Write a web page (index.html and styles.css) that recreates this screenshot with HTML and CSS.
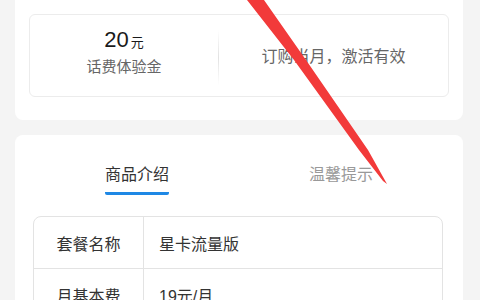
FILE: index.html
```html
<!DOCTYPE html>
<html>
<head>
  <meta charset="utf-8">
  <link rel="stylesheet" href="styles.css">
</head>
<body>
  <div class="page">
    <div class="card card-top">
      <div class="bonus-box">
        <div class="bonus-amount">
          <div class="amount"><span class="num">20</span><span class="unit">元</span></div>
          <div class="amount-label">话费体验金</div>
        </div>
        <div class="bonus-divider"></div>
        <div class="bonus-note">订购当月，激活有效</div>
      </div>
    </div>

    <div class="card card-detail">
      <div class="tabs">
        <div class="tab active"><span>商品介绍</span></div>
        <div class="tab"><span>温馨提示</span></div>
      </div>

      <div class="info-table">
        <div class="info-row">
          <div class="info-key">套餐名称</div>
          <div class="info-val">星卡流量版</div>
        </div>
        <div class="info-row">
          <div class="info-key">月基本费</div>
          <div class="info-val">19元/月</div>
        </div>
      </div>
    </div>
  </div>

  <!-- annotation stroke drawn over the screenshot -->
  <svg class="mark" width="480" height="300" viewBox="0 0 480 300">
    <polygon points="247,0 264,0 306,60 368,150 387,184 383,181 359,150 294,60" fill="#f23a3a"/>
  </svg>
</body>
</html>
```

FILE: styles.css
```css
body {
  margin: 0;
  padding: 0;
  background: #f4f4f4;
  font-family: "Liberation Sans", "Noto Sans CJK SC", sans-serif;
  color: #333;
  overflow: hidden;
}

.page {
  padding: 0 17px 0 15px;
}

.card {
  background: #fff;
  border-radius: 8px;
}

.card-top {
  border-radius: 0 0 8px 8px;
  padding: 14px 14px 23px 14px;
}

.bonus-box {
  display: flex;
  height: 81px;
  border: 1px solid #ececec;
  border-radius: 6px;
}

.bonus-amount {
  flex: 0 0 188px;
  display: flex;
  flex-direction: column;
  align-items: center;
  padding-top: 13px;
  box-sizing: border-box;
}

.amount {
  line-height: 24px;
  color: #1a1a1a;
}

.amount .num {
  font-size: 22px;
}

.amount .unit {
  font-size: 13px;
  margin-left: 2px;
}

.amount-label {
  margin-top: 2px;
  font-size: 15px;
  line-height: 20px;
  color: #666;
}

.bonus-divider {
  width: 1px;
  margin: 15px 0 11px 0;
  background: linear-gradient(to bottom, rgba(225, 225, 225, 0), #e2e2e2, rgba(225, 225, 225, 0));
}

.bonus-note {
  flex: 1;
  display: flex;
  align-items: center;
  justify-content: center;
  font-size: 16px;
  color: #666;
  padding-bottom: 1px;
}

.card-detail {
  margin-top: 15px;
  padding: 29px 20px 0 18px;
}

.tabs {
  display: flex;
  padding: 0 0 0 2px;
}

.tab {
  flex: 1;
  text-align: center;
  font-size: 16px;
  line-height: 22px;
  color: #999;
}

.tab span {
  display: inline-block;
  padding-bottom: 6px;
  border-bottom: 3px solid transparent;
}

.tab.active {
  color: #333;
}

.tab.active span {
  border-bottom-color: #1e88e5;
  border-radius: 0 0 2px 2px;
}

.info-table {
  margin-top: 21px;
  border: 1px solid #e3e3e3;
  border-radius: 8px;
}

.info-row {
  display: flex;
  height: 51px;
  border-top: 1px solid #e3e3e3;
}

.info-row:first-child {
  border-top: none;
}

.info-key {
  flex: 0 0 109px;
  display: flex;
  align-items: center;
  justify-content: center;
  border-right: 1px solid #e3e3e3;
  font-size: 16px;
  color: #333;
}

.info-val {
  flex: 1;
  display: flex;
  align-items: center;
  padding-left: 15px;
  font-size: 16px;
  color: #333;
}

.mark {
  position: fixed;
  top: 0;
  left: 0;
  pointer-events: none;
}
```
